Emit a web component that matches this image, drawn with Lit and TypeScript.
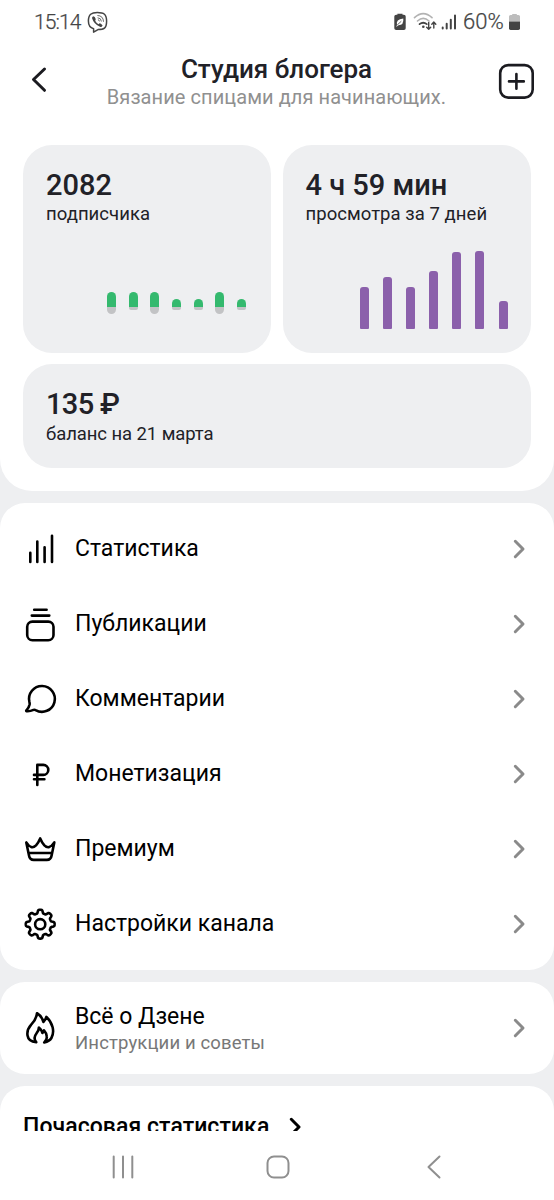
import { LitElement, html, css, svg } from "lit";
import { customElement } from "lit/decorators.js";

const gearPath = (): string => {
  const pts: string[] = [];
  const n = 192;
  for (let i = 0; i < n; i++) {
    const a = (i / n) * Math.PI * 2;
    const r = 12.7 + 1.75 * Math.tanh(2.2 * Math.cos(8 * a));
    pts.push(`${(16.2 + r * Math.sin(a)).toFixed(2)} ${(16.2 - r * Math.cos(a)).toFixed(2)}`);
  }
  return `M${pts.join("L")}Z`;
};

const icons = {
  stats: svg`<path d="M6.3 19.8V28.9M13.3 8.6V28.9M20.6 14.2V28.9M28 2.8V28.9"/>`,
  posts: svg`<path d="M10.2 1.8H22.6M7.8 7.6H25.3"/><rect x="3.2" y="13.6" width="26.3" height="18.6" rx="5.2"/>`,
  comments: svg`<path d="M5.4 18.8A12.9 12.9 0 1 1 11.6 27.1Q10.6 26.5 9.5 26.9Q6 28.5 2.6 28.2Q1.9 28 2.4 27.3Q5 24.7 5.6 21.5Q5.8 20.2 5.4 18.8Z"/>`,
  ruble: svg`<path d="M13.3 27V6.9H19.3A4.95 4.95 0 0 1 19.3 16.9H10M10 21.2H20.4"/>`,
  crown: svg`<path d="M2.3 9.4Q7.2 17.2 12 12.3Q14.5 9.5 16.2 5.4Q17.9 9.5 20.4 12.3Q25.2 17.2 30.3 9.4L27.6 22.5Q26.9 26.9 22.9 26.9H9.7Q5.7 26.9 5 22.5ZM4.6 20H28"/>`,
  gear: svg`<path d="${gearPath()}"/><circle cx="16.2" cy="16.2" r="5.1"/>`,
  flame: svg`<path d="M12.2 30.2C1.2 29.4 1.8 18.8 7 12.9Q12.4 7.4 13 1.2Q17.8 4.2 19.4 9.9Q21.4 8.2 22.4 4.9C28.7 11 31 19.5 27.4 26Q25.6 29.2 20.2 30.4C22.6 28.5 23.1 26.6 22.7 24.2Q22.3 20.8 20 18.3L18.4 21Q17.6 17.6 14.9 15.6Q14.8 18.7 12.6 21.2C9.8 24.7 10.2 27.8 12.2 30.2Z"/>`,
};

const menu = [
  { icon: icons.stats, label: "Статистика" },
  { icon: icons.posts, label: "Публикации" },
  { icon: icons.comments, label: "Комментарии" },
  { icon: icons.ruble, label: "Монетизация" },
  { icon: icons.crown, label: "Премиум" },
  { icon: icons.gear, label: "Настройки канала" },
];

const subscribers = [
  [15, 7], [15, 3], [15, 7], [8, 3], [8, 3], [15, 7], [8, 3],
];
const watchTime = [42, 52, 42, 58, 76.5, 78, 27.5];

const chevron = html`<svg class="chevron" viewBox="0 0 14 22"><path d="M3.3 3.3L11 11L3.3 18.7"/></svg>`;

@customElement("app-root")
export class AppRoot extends LitElement {
  static styles = css`
    :host {
      display: flex;
      flex-direction: column;
      width: 554px;
      height: 1200px;
      overflow: hidden;
      background: #eeeff1;
      font-family: Roboto, "Noto Sans", sans-serif;
      color: #000;
    }
    * { box-sizing: border-box; }
    svg { display: block; flex: none; fill: none; stroke-linecap: round; stroke-linejoin: round; }
    .top { background: #fff; height: 491px; flex: none; border-radius: 0 0 32px 32px; }
    .status { display: flex; height: 44px; padding: 0 33px 0 34px; align-items: center; color: #444; font-size: 21px; line-height: 46px; }
    .clock { width: 53px; white-space: nowrap; font-size: 21px; font-weight: 300; letter-spacing: -0.9px; -webkit-text-stroke: 0.25px #444; }
    .tray { margin-left: auto; display: flex; align-items: center; }
    .percent { width: 44px; white-space: nowrap; font-size: 22px; font-weight: 300; letter-spacing: 0.1px; -webkit-text-stroke: 0.25px #444; }
    .header { display: flex; height: 101px; padding: 11px 19px 0 30px; justify-content: space-between; align-items: flex-start; }
    .back { margin-top: 9px; stroke: #1b1b20; stroke-width: 3; }
    .add { margin-top: 7px; stroke: #1b1b20; stroke-width: 2.6; }
    .titles { text-align: center; width: 400px; padding-left: 8px; white-space: nowrap; }
    .title { font-size: 26px; font-weight: 500; line-height: 28px; color: #212127; }
    .subtitle { font-size: 20px; line-height: 28px; color: #909090; letter-spacing: 0.07px; }
    .cards { display: grid; grid-template-columns: 248px 248px; grid-template-rows: 207.5px 103.5px; gap: 11.5px; padding: 0 23px; }
    .card { background: #eeeff1; border-radius: 29px; padding: 24px 23px; display: flex; flex-direction: column; white-space: nowrap; }
    .wide { grid-column: span 2; }
    .value { font-size: 29px; font-weight: 500; line-height: 32px; color: #212127; }
    .wide .value { letter-spacing: -0.65px; line-height: 33px; }
    .caption { font-size: 18.5px; line-height: 26px; color: #212127; letter-spacing: 0.05px; }
    .wide .caption { letter-spacing: -0.08px; }
    .chart { margin-top: auto; display: flex; justify-content: flex-end; }
    .growth { gap: 12.65px; height: 37px; padding-right: 2px; align-items: flex-start; }
    .pill { display: grid; grid-template-rows: 15px auto; width: 9px; align-items: end; }
    .gain { background: #34b96e; border-radius: 4.5px 4.5px 0 0; }
    .loss { background: #c2c3c5; border-radius: 0 0 2px 2px; }
    .loss.deep { border-radius: 0 0 4.5px 4.5px; }
    .watch { gap: 14.05px; align-items: flex-end; }
    .bar { width: 9px; background: #8b60ab; border-radius: 3px 3px 1px 1px; }
    .section { background: #fff; flex: none; border-radius: 25px; margin-top: 11.5px; }
    .menu { padding: 8.5px 0; }
    .row { display: flex; align-items: center; height: 75px; padding: 0 28px 0 24px; }
    .about { height: 92.5px; margin-top: 12px; }
    .about .row { height: 92px; }
    .icon { width: 33px; height: 33px; overflow: visible; stroke: #000; stroke-width: 2.6; margin: 1px 0 0 -0.5px; }
    .label { font-size: 23px; line-height: 30px; white-space: nowrap; }
    .text { flex: 1; padding: 1px 0 0 18.5px; }
    .hint { font-size: 18.5px; line-height: 23px; color: #777; white-space: nowrap; letter-spacing: 0.14px; }
    .chevron { width: 14px; height: 22px; stroke: #8a8a8a; stroke-width: 3; }
    .hourly { height: 45.5px; border-radius: 25px 25px 0 0; overflow: hidden; margin-top: 11.5px; padding: 26px 23px 0; display: flex; align-items: flex-start; gap: 19px; }
    .heading { font-size: 23px; font-weight: 500; line-height: 30px; white-space: nowrap; letter-spacing: 0.06px; }
    .hourly .chevron { stroke: #000; margin-top: 4px; }
    .nav { flex: 1; background: #fff; display: flex; align-items: center; padding: 3px 0 0 112px; }
    .nav svg { stroke: #8f8f8f; stroke-width: 2; }
    .home { margin: 0 136px 0 132px; }
  `;

  render() {
    return html`
      <div class="top">
        <div class="status">
          <span class="clock">15:14</span>
          <svg width="22" height="24" viewBox="0 0 22 24" stroke="#444" stroke-width="1.5">
            <path d="M10.3 2.5C16.9 2.5 19.6 4.2 19.6 11.3S16.9 19.6 11 19.6L6.6 22.2V18.8C2.6 17.6 1.4 15 1.4 11C1.4 4.2 4.4 2.5 10.3 2.5Z"/>
            <path d="M6.2 6.2Q8 6.3 8.8 9.2Q7.8 10.2 8.5 11.3Q9.5 13.5 11.6 14.2Q12.5 13 13.4 13.4Q15 14.2 15.6 15.4Q14.8 17.2 13.4 17Q6.8 14.4 5 8Q5.2 6.6 6.2 6.2Z" fill="#444" stroke="none"/>
            <path d="M10.8 5.5Q16.3 5.7 16.5 11.4M11 7.8Q14.2 8 14.4 11.1M11.3 9.8Q12.4 9.9 12.5 11" stroke-width=".8"/>
          </svg>
          <div class="tray">
            <svg width="69" height="24" viewBox="0 -.5 69 24">
              <path d="M3.4 4.2V3.3H8.5V4.2H9.9Q11.7 4.2 11.7 6V17.7Q11.7 19.5 9.9 19.5H2.2Q.3 19.5 .3 17.7V6Q.3 4.2 2.2 4.2Z" fill="#444"/>
              <path d="M3 14.5Q1.5 9 9.3 8.1Q10 14.8 4.5 14.8L2.2 16.5Z" fill="#fff"/>
              <path d="M3.5 14.2L7 11" stroke="#444" stroke-width=".8"/>
              <path d="M20.5 7.2Q29.2-.8 38 7.2M23.5 10.5Q29.2 5.4 35 10.5" stroke="#b2b2b2" stroke-width="1.6"/>
              <path d="M25.5 13.7Q29.2 10.8 32.8 13.7" stroke="#444" stroke-width="1.7"/>
              <circle cx="29.3" cy="16.3" r="1.3" fill="#444"/>
              <path d="M34.7 12V18.7M32.7 16.7L34.7 18.8L36.7 16.7M39.8 17.5V11.7M37.8 13.7L39.8 11.6L41.8 13.7" stroke="#444" stroke-width="1.4"/>
              <path d="M48.7 17V18M52.7 13.3V18M56.8 9.3V18M61 5V18" stroke="#444" stroke-width="2"/>
            </svg>
            <span class="percent">60%</span>
            <svg width="14" height="24" viewBox="0 -.5 14 24">
              <path d="M5.2 4.4V3.4H9.8V4.4H11.5Q13 4.4 13 6V11H2V6Q2 4.4 3.5 4.4Z" fill="#bdbdbd"/>
              <path d="M2 11H13V17.8Q13 19.4 11.4 19.4H3.6Q2 19.4 2 17.8Z" fill="#444"/>
            </svg>
          </div>
        </div>
        <div class="header">
          <svg class="back" width="18" height="30" viewBox="0 0 18 30"><path d="M14.5 5L3.5 15.5L14.5 26.3"/></svg>
          <div class="titles">
            <div class="title">Студия блогера</div>
            <div class="subtitle">Вязание спицами для начинающих.</div>
          </div>
          <svg class="add" width="38" height="38" viewBox="0 0 38 38"><rect x="3.2" y="3.1" width="32.5" height="32.5" rx="8"/><path d="M12 19.4H26.8M19.4 12V26.8"/></svg>
        </div>
        <div class="cards">
          <div class="card">
            <div class="value">2082</div>
            <div class="caption">подписчика</div>
            <div class="chart growth">
              ${subscribers.map(([up, down]) => html`<div class="pill">
                <div class="gain" style="height:${up}px"></div>
                <div class="loss ${down > 4 ? "deep" : ""}" style="height:${down}px"></div>
              </div>`)}
            </div>
          </div>
          <div class="card">
            <div class="value">4 ч 59 мин</div>
            <div class="caption">просмотра за 7 дней</div>
            <div class="chart watch">${watchTime.map((h) => html`<div class="bar" style="height:${h}px"></div>`)}</div>
          </div>
          <div class="card wide">
            <div class="value">135 ₽</div>
            <div class="caption">баланс на 21 марта</div>
          </div>
        </div>
      </div>
      <div class="section menu">
        ${menu.map((m) => html`<div class="row">
          <svg class="icon" viewBox="0 0 33 33">${m.icon}</svg>
          <div class="text"><div class="label">${m.label}</div></div>
          ${chevron}
        </div>`)}
      </div>
      <div class="section about">
        <div class="row">
          <svg class="icon" viewBox="0 0 33 33">${icons.flame}</svg>
          <div class="text"><div class="label">Всё о Дзене</div><div class="hint">Инструкции и советы</div></div>
          ${chevron}
        </div>
      </div>
      <div class="section hourly"><div class="heading">Почасовая статистика</div>${chevron}</div>
      <div class="nav">
        <svg width="22" height="24" viewBox="0 0 22 24"><path d="M1.7 1.5V22.5M11 1.5V22.5M20.3 1.5V22.5"/></svg>
        <svg class="home" width="24" height="24" viewBox="0 0 24 24"><rect x="1.5" y="1.5" width="21" height="21" rx="6.5"/></svg>
        <svg width="16" height="24" viewBox="0 0 16 24"><path d="M13.5 1.5L2.5 12L13.5 22.5"/></svg>
      </div>
    `;
  }
}
